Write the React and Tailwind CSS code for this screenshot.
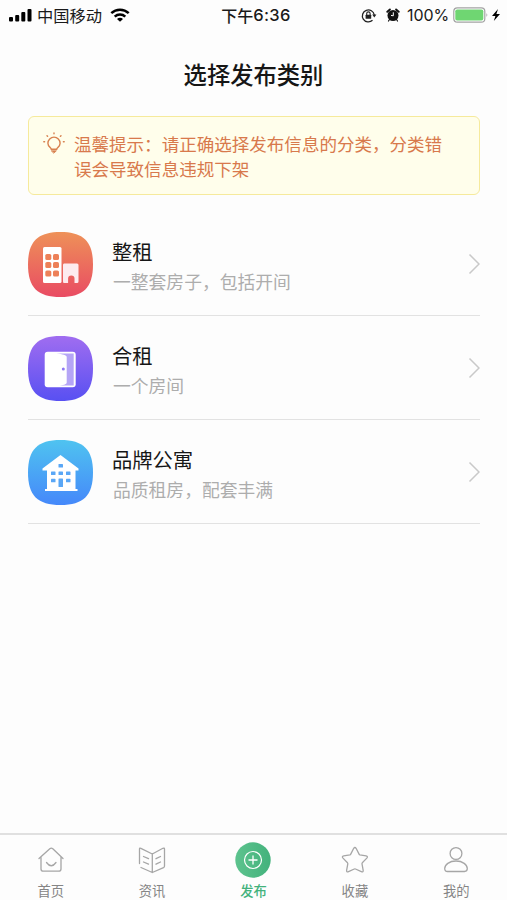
import React from "react";

const squircle = "M32.5 0C55.500 0 65 9.500 65 32.500S55.500 65 32.500 65 0 55.500 0 32.500 9.500 0 32.500 0Z";

function Tile({ id, from, to, children }) {
  return (
    <svg className="block h-[65px] w-[65px] shrink-0" viewBox="0 0 65 65">
      <defs>
        <linearGradient id={id} x1="0" y1="0" x2="0" y2="1">
          <stop offset="0" stopColor={from} />
          <stop offset="1" stopColor={to} />
        </linearGradient>
      </defs>
      <path d={squircle} fill={`url(#${id})`} />
      {children}
    </svg>
  );
}

function BuildingTile() {
  return (
    <Tile id="whole" from="#ee9158" to="#e94b63">
      <rect x="15" y="15" width="18.500" height="36" rx="1.500" fill="#fff" />
      {[22, 30, 38.5].map((y) =>
        [17.3, 25].map((x) => (
          <rect key={`${x}-${y}`} x={x} y={y} width="6" height="6" rx="1.600" fill="#ed8058" />
        ))
      )}
      <path d="M36 31.500h13q1.500 0 1.500 1.500v16.500q0 1.500-1.500 1.500h-2.500v-4.500q0-3-3.200-3t-3.200 3V51H36q-1 0-1-1.500V33q0-1.500 1-1.500Z" fill="#fdebef" />
    </Tile>
  );
}

function DoorTile() {
  return (
    <Tile id="shared" from="#a06df0" to="#5850f2">
      <rect x="16.700" y="15.700" width="31" height="35.500" rx="3" fill="#fff" />
      <path d="M28.500 17.500h17.200v32H30c5 0 8.700-1 8.700-3V21c0-2-4-2.800-10.200-3.500Z" fill="#b5a5f6" />
      <circle cx="35.300" cy="33" r="1.500" fill="#8e78f3" />
    </Tile>
  );
}

function HouseTile() {
  return (
    <Tile id="brand" from="#4fc3f0" to="#4588fa">
      <path d="M32.500 15 50.500 28.500v2H47.500V49h2v2H17v-2h2V30.500h-4.500v-2Z" fill="#fff" />
      <g fill="#5aa7f6">
        <rect x="30.500" y="24" width="4.500" height="3.500" rx=".6" />
        {[23, 30.5, 38].map((x) => (
          <rect key={x} x={x} y="31.500" width="4.500" height="3.500" rx=".6" />
        ))}
        <rect x="23" y="38.800" width="4.500" height="3.500" rx=".6" />
        <rect x="38" y="38.800" width="4.500" height="3.500" rx=".6" />
        <rect x="30.500" y="38.500" width="4.500" height="8.500" rx=".6" />
      </g>
    </Tile>
  );
}

function StatusBar() {
  return (
    <div className="flex h-[30px] items-center text-[16px] leading-none text-[#1a1a1a]">
      <div className="flex w-[169px] items-center pl-[9px]">
        <svg className="h-[14px] w-[23px]" viewBox="0 0 23 14" fill="#000">
          <rect x="0" y="9" width="4" height="4.500" rx="1" />
          <rect x="6.200" y="7" width="4" height="6.500" rx="1" />
          <rect x="12.300" y="4" width="4" height="9.500" rx="1" />
          <rect x="18.500" y="1" width="4" height="12.500" rx="1" />
        </svg>
        <span className="-mt-px ml-[5px] whitespace-nowrap text-[16.300px] leading-[24px]">中国移动</span>
        <svg className="ml-[8px] h-[14px] w-[20px]" viewBox="0 0 20 14" fill="none" stroke="#000" strokeWidth="2.500">
          <path d="M1.300 5.200C6.200.6 13.800.6 18.700 5.200" />
          <path d="M4.700 8.600c3-2.800 7.600-2.800 10.600 0" />
          <path d="M10 13.800 7 10.900c1.700-1.600 4.300-1.600 6 0Z" fill="#000" stroke="none" />
        </svg>
      </div>
      <div className="flex w-[174px] items-center justify-center whitespace-nowrap font-medium leading-[24px]">
        <span className="-mt-px">下午</span>
        <span className="font-['Inter'] text-[16.500px] tracking-[0.3px]">6:36</span>
      </div>
      <div className="flex flex-1 items-center pl-[18px]">
        <svg className="h-[15px] w-[16px] shrink-0" viewBox="0 0 16 15" fill="none" stroke="#222" strokeWidth="1.300">
          <path d="M11.500 12.300A6 6 0 1 1 13.300 7" />
          <path d="m11.200 6.500 4.200 0-2.100 3Z" fill="#222" stroke="none" />
          <rect x="4.600" y="6.800" width="5.600" height="4" rx=".5" fill="#222" stroke="none" />
          <path d="M5.700 7V5.600a1.700 1.700 0 0 1 3.400 0V7" strokeWidth="1.100" />
        </svg>
        <svg className="ml-[9px] h-[14px] w-[14px] shrink-0" viewBox="0 0 14 14">
          <circle cx="7" cy="7.500" r="5.500" fill="#111" />
          <path d="M1.300 3.800 3.900 1.500M12.700 3.800l-2.600-2.300" stroke="#111" strokeWidth="1.900" strokeLinecap="round" />
          <path d="m3.500 11.500-1 1.500M10.500 11.500l1 1.500" stroke="#111" strokeWidth="1.200" strokeLinecap="round" />
          <path d="M7.300 4.300v3.500L5 7.400" fill="none" stroke="#fff" strokeWidth="1" />
        </svg>
        <span className="ml-[7px] w-[43px] whitespace-nowrap font-['Inter'] text-[16px] tracking-[-0.1px]">100%</span>
        <svg className="ml-[3px] h-[16px] w-[48px] shrink-0" viewBox="0 0 48 16">
          <rect x=".8" y=".8" width="31" height="14.400" rx="3.500" fill="#fff" stroke="#a3a3a3" strokeWidth="1.200" />
          <rect x="2.300" y="2.400" width="28" height="11.200" rx="1.800" fill="#6fd672" />
          <path d="M33.500 6q1.700 2 0 4Z" fill="#999" />
          <path d="m45 2-6 7h3.400L40.800 14 47 7h-3.600Z" fill="#000" />
        </svg>
      </div>
    </div>
  );
}

function Row({ icon, title, note }) {
  return (
    <div className="flex h-[104px] items-center border-b border-[#e2e2e2] pt-px">
      {icon}
      <div className="ml-[19px] flex-1 pt-[3px]">
        <div className="text-[20.300px] leading-[30px] text-[#161616]">{title}</div>
        <div className="mt-px pl-px text-[17.800px] leading-[28px] text-[#adadad]">{note}</div>
      </div>
      <svg className="h-[22px] w-[12px]" viewBox="0 0 12 22" fill="none" stroke="#c9c9c9" strokeWidth="1.500">
        <path d="m1.500 1.500 9.500 9.500-9.500 9.500" />
      </svg>
    </div>
  );
}

const line = {
  className: "h-[28px] w-[28px]",
  viewBox: "0 0 28 28",
  fill: "none",
  stroke: "#a6a6a6",
  strokeWidth: 1.3,
  strokeLinecap: "round",
  strokeLinejoin: "round",
};

const tabs = [
  {
    label: "首页",
    icon: (
      <svg {...line}>
        <path d="M2 12.500 12.800 2.800q1.500-1.200 3 0L26 12.500M4 11v12q0 2.200 2.500 2.200h15q2.500 0 2.500-2.200V11M9.500 16.500q4.800 6.500 9.500 0" />
      </svg>
    ),
  },
  {
    label: "资讯",
    icon: (
      <svg {...line}>
        <path d="M1.500 17.500V3q0-1.300 1.400-.7L14.300 8l10.600-5.700q1.600-.8 1.600.8V20q0 1.200-1 1.700L14.300 26.500 3 21.500M14.300 8v18.500M5.500 10.500l5 2.200M5.500 16l5 2.200M18 12.700l4.500-2.200M18 18.200l4.500-2.200" />
      </svg>
    ),
  },
  {
    label: "发布",
    active: true,
    icon: (
      <svg className="h-[36px] w-[36px]" viewBox="0 0 36 36" fill="none">
        <defs>
          <linearGradient id="publish" x1="0" y1="0" x2="1" y2="0">
            <stop stopColor="#5dc38e" />
            <stop offset="1" stopColor="#43b27c" />
          </linearGradient>
        </defs>
        <circle cx="18" cy="18" r="17.700" fill="url(#publish)" />
        <circle cx="18" cy="18" r="8.500" stroke="#fff" strokeWidth="1.200" />
        <path d="M18 13.500v9M13.500 18h9" stroke="#fff" strokeWidth="1.300" />
      </svg>
    ),
  },
  {
    label: "收藏",
    icon: (
      <svg {...line}>
        <path d="M12.600 2.500q1.300-2 2.600 0l3 5.900q.2.400.7.500l6.200 1q2.200.5.700 2.200l-4.500 4.700q-.4.500-.3 1l1.200 6.500q.2 2.200-1.900 1.300L14.500 23q-.6-.2-1.200 0l-5.800 2.600q-2.100.9-1.900-1.300l1.200-6.500q.1-.5-.3-1L2 12.100Q.5 10.400 2.700 9.900l6.200-1q.5-.1.7-.5Z" />
      </svg>
    ),
  },
  {
    label: "我的",
    icon: (
      <svg {...line}>
        <circle cx="14" cy="7.500" r="5.900" />
        <path d="M14 15c6.700 0 11.300 3.800 11.300 7.600 0 1.900-1 2.900-2.800 2.900h-17c-1.800 0-2.800-1-2.800-2.900C2.700 18.800 7.300 15 14 15Z" />
      </svg>
    ),
  },
];

export default function App() {
  return (
    <div className="flex h-[900px] w-[507px] flex-col overflow-hidden bg-[#fdfdfd] font-['Noto_Sans_CJK_SC',sans-serif]">
      <StatusBar />
      <h1 className="mt-[26px] text-center text-[23.300px] font-medium leading-[36px] text-[#161616]">选择发布类别</h1>
      <div className="ml-[28px] mr-[27px] mt-[24px] flex h-[79px] rounded-[6px] border-[1.500px] border-[#f6ea9c] bg-[#fffeeb] pl-[14px] pt-[14px]">
        <svg className="mt-[1px] h-[22px] w-[22px] shrink-0" viewBox="0 0 22 22" fill="none" stroke="#d8814f" strokeWidth="1.400" strokeLinecap="round">
          <path d="M8.300 17.300c0-1.400-3.400-2.600-3.400-6.100a6.100 6.100 0 0 1 12.200 0c0 3.500-3.400 4.700-3.400 6.100Z" />
          <path d="M8.600 18.800h4.800L11 21Z" fill="#d8814f" strokeWidth=".8" />
          <path d="M11 1v.8M4 3.700l.6.600M18 3.700l-.6.600M.8 9.700h.8M20.400 9.700h.8" />
        </svg>
        <p className="ml-[9px] whitespace-nowrap text-[17.550px] leading-[25px] text-[#d8794c]">
          温馨提示：请正确选择发布信息的分类，分类错
          <br />
          误会导致信息违规下架
        </p>
      </div>
      <main className="ml-[28px] mr-[27px] mt-[17px] flex-1">
        <Row icon={<BuildingTile />} title="整租" note="一整套房子，包括开间" />
        <Row icon={<DoorTile />} title="合租" note="一个房间" />
        <Row icon={<HouseTile />} title="品牌公寓" note="品质租房，配套丰满" />
      </main>
      <nav className="grid h-[67px] grid-cols-5 border-t-2 border-[#e0e0e0]">
        {tabs.map((t) => (
          <div key={t.label} className="flex flex-col items-center pt-[6px]">
            <div className="flex h-[37px] items-center">{t.icon}</div>
            <span className={t.active ? "mt-[3px] text-[13.300px] font-medium leading-[20px] text-[#43b27c]" : "mt-[3px] text-[13.300px] leading-[20px] text-[#858585]"}>
              {t.label}
            </span>
          </div>
        ))}
      </nav>
    </div>
  );
}
